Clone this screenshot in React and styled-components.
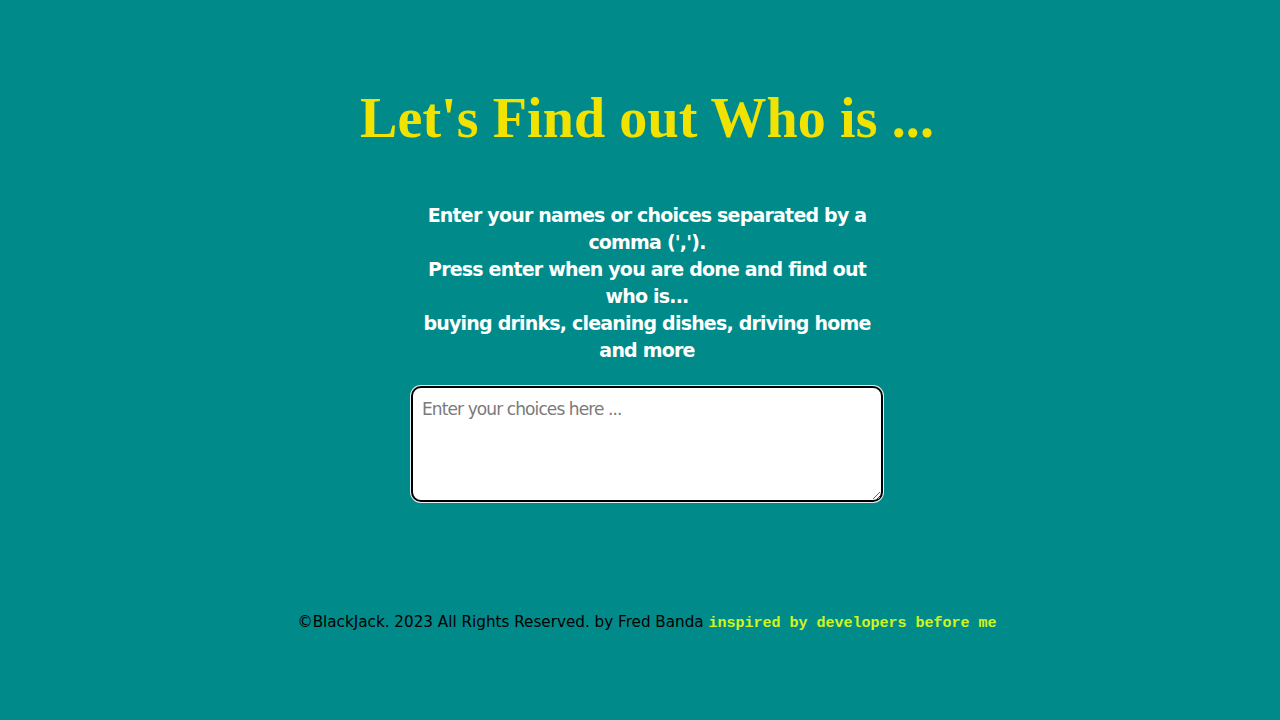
import React from "react";
import styled, { createGlobalStyle } from "styled-components";

const Global = createGlobalStyle`
  html, body { margin: 0; padding: 0; background: #008b8a; }
  body { min-height: 720px; }
`;

const Page = styled.main`
  min-height: 720px;
  box-sizing: border-box;
  background: #008b8a;
  padding: 83px 0 0 14px;
  display: flex;
  flex-direction: column;
  align-items: center;
`;

const Title = styled.h1`
  margin: 0;
  font-family: "Liberation Serif", "DejaVu Serif", serif;
  font-weight: 700;
  font-size: 56px;
  line-height: 70px;
  color: #f2e200;
  letter-spacing: 0.1px;
`;

const Intro = styled.p`
  margin: 49px 0 0;
  width: 480px;
  text-align: center;
  font-family: "DejaVu Sans", Verdana, sans-serif;
  font-weight: 700;
  font-size: 19px;
  line-height: 27px;
  color: #ffffff;
  letter-spacing: -0.8px;
`;

const Choices = styled.textarea`
  margin-top: 22px;
  box-sizing: border-box;
  width: 472px;
  height: 116px;
  padding: 11px 9px 8px;
  border: 2px solid #000;
  border-radius: 10px;
  box-shadow: 0 0 0 1px #e8f0f0;
  background: #fff;
  font-family: "DejaVu Sans", Verdana, sans-serif;
  font-size: 17px;
  letter-spacing: -0.9px;
  color: #222;
  outline: none;
  &::placeholder { color: #7a7a7a; }
`;

const Footer = styled.footer`
  margin-top: 111px;
  font-family: "DejaVu Sans", sans-serif;
  font-size: 15.2px;
  color: #000;
  white-space: nowrap;
  letter-spacing: 0;
`;

const Credit = styled.span`
  font-family: "Liberation Mono", "DejaVu Sans Mono", monospace;
  font-weight: 700;
  font-size: 15px;
  letter-spacing: 0;
  color: #d2f520;
`;

export default function App() {
  return (
    <>
      <Global />
      <Page>
        <Title>Let's Find out Who is ...</Title>
        <Intro>
          Enter your names or choices separated by a<br />
          comma (',').<br />
          Press enter when you are done and find out<br />
          who is...<br />
          buying drinks, cleaning dishes, driving home<br />
          and more
        </Intro>
        <Choices placeholder="Enter your choices here ..." />
        <Footer>
          ©BlackJack. 2023 All Rights Reserved. by Fred Banda{" "}
          <Credit>inspired by developers before me</Credit>
        </Footer>
      </Page>
    </>
  );
}
